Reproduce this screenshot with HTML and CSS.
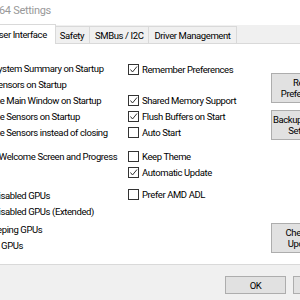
FILE: index.html
```html
<!DOCTYPE html>
<html lang="en">

<head>
    <meta charset="UTF-8" />
    <title>HWiNFO64 Settings</title>
    <link rel="stylesheet" href="styles.css">
</head>

<body>
    <div class="window">
        <div class="titlebar">HWiNFO64 Settings</div>

        <div class="tabs">
            <div class="tab active">User Interface</div>
            <div class="tab">Safety</div>
            <div class="tab">SMBus / I2C</div>
            <div class="tab">Driver Management</div>
        </div>

        <div class="page">
            <div class="col col-left">
                <label class="check"><span class="box"></span>Show System Summary on Startup</label>
                <label class="check"><span class="box"></span>Show Sensors on Startup</label>
                <label class="check"><span class="box"></span>Minimize Main Window on Startup</label>
                <label class="check"><span class="box"></span>Minimize Sensors on Startup</label>
                <label class="check"><span class="box"></span>Minimize Sensors instead of closing</label>
                <label class="check group-welcome"><span class="box"></span>Display Welcome Screen and Progress</label>
                <label class="check group-gpu"><span class="box"></span>Show Disabled GPUs</label>
                <label class="check"><span class="box"></span>Show Disabled GPUs (Extended)</label>
                <label class="check group-sleep"><span class="box"></span>Poll Sleeping GPUs</label>
                <label class="check"><span class="box"></span>Monitor GPUs</label>
            </div>

            <div class="col col-right">
                <label class="check"><span class="box checked"><svg viewBox="0 0 9 9"><polyline points="1.5,4.5 3.5,7 8,1.5" /></svg></span>Remember Preferences</label>
                <label class="check group-shm"><span class="box checked"><svg viewBox="0 0 9 9"><polyline points="1.5,4.5 3.5,7 8,1.5" /></svg></span>Shared Memory Support</label>
                <label class="check"><span class="box checked"><svg viewBox="0 0 9 9"><polyline points="1.5,4.5 3.5,7 8,1.5" /></svg></span>Flush Buffers on Start</label>
                <label class="check"><span class="box"></span>Auto Start</label>
                <label class="check group-theme"><span class="box"></span>Keep Theme</label>
                <label class="check"><span class="box checked"><svg viewBox="0 0 9 9"><polyline points="1.5,4.5 3.5,7 8,1.5" /></svg></span>Automatic Update</label>
                <label class="check group-adl"><span class="box"></span>Prefer AMD ADL</label>
            </div>

            <div class="col col-buttons">
                <button class="btn tall">Reset<br>Preferences</button>
                <button class="btn tall">Backup/Restore<br>Settings</button>
                <button class="btn tall btn-update">Check for<br>Updates</button>
            </div>
        </div>

        <div class="footer">
            <button class="btn">OK</button>
            <button class="btn">Cancel</button>
        </div>
    </div>
</body>

</html>
```

FILE: styles.css
```css
* {
    box-sizing: border-box;
}

html,
body {
    margin: 0;
    overflow: hidden;
}

body {
    width: 300px;
    height: 300px;
    background: #f0f0f0;
    font-family: Roboto, 'Liberation Sans', sans-serif;
    font-size: 9.5px;
    letter-spacing: -0.4px;
    color: #000;
}

.window {
    width: 420px;
    margin-left: -60px;
}

.titlebar {
    height: 25px;
    padding-left: 19px;
    background: #fff;
    color: #999;
    font-size: 11px;
    letter-spacing: -0.3px;
    line-height: 22px;
}

/* tab strip */
.tabs {
    display: flex;
    align-items: flex-end;
    height: 18px;
    padding-left: 44px;
}

.tab {
    height: 17px;
    padding: 0 5px;
    border: 1px solid #d9d9d9;
    border-bottom: none;
    border-left: none;
    background: #f0f0f0;
    line-height: 17px;
}

.tab.active {
    position: relative;
    z-index: 1;
    height: 20px;
    margin: 0 -1px -1px 0;
    padding: 0 8px;
    border-left: 1px solid #d9d9d9;
    background: #fff;
    line-height: 20px;
}

/* tab page */
.page {
    display: flex;
    height: 222px;
    padding: 16px 0 0 13px;
    border: 1px solid #d9d9d9;
    background: #fff;
}

.col {
    display: flex;
    flex-direction: column;
}

.col-left {
    width: 173px;
    margin-left: 1px;
}

.col-right {
    width: 143px;
    padding-top: 1px;
}

.check {
    display: flex;
    align-items: center;
    gap: 3px;
    height: 16px;
    white-space: nowrap;
}

.box {
    flex: none;
    width: 11px;
    height: 11px;
    border: 1px solid #333;
    background: #fff;
}

.box svg {
    display: block;
    width: 9px;
    height: 9px;
}

.box polyline {
    fill: none;
    stroke: #333;
    stroke-width: 1;
}

.group-welcome {
    margin-top: 8px;
}

.group-gpu {
    margin-top: 23px;
}

.group-sleep {
    margin-top: 2px;
}

.group-shm {
    margin-top: 15px;
}

.group-theme {
    margin-top: 8px;
}

.group-adl {
    margin-top: 6px;
}

/* buttons */
.btn {
    padding: 0;
    border: 1px solid #adadad;
    background: #e1e1e1;
    font-family: inherit;
    font-size: 9.5px;
    letter-spacing: -0.4px;
    color: #000;
}

.col-buttons {
    gap: 7px;
    padding-top: 13px;
}

.btn.tall {
    width: 66px;
    height: 30px;
    line-height: 11px;
}

.btn-update {
    margin-top: 76px;
}

.footer {
    display: flex;
    justify-content: flex-end;
    gap: 7px;
    height: 35px;
    padding: 11px 6px 0 0;
}

.footer .btn {
    width: 61px;
    height: 18px;
}
```
